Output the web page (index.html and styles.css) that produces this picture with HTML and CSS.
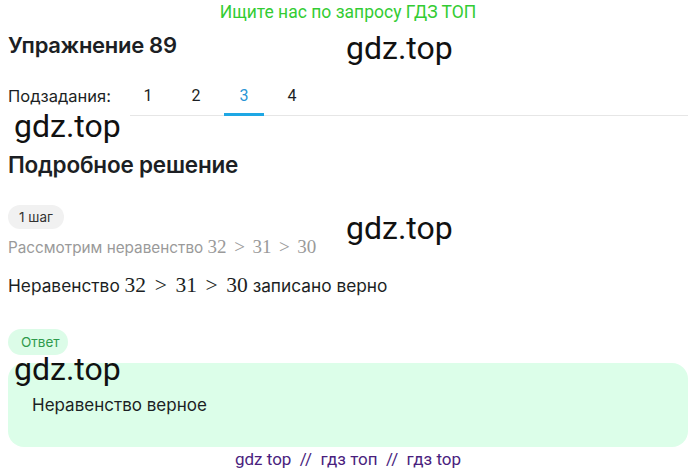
FILE: index.html
```html
<!DOCTYPE html>
<html lang="ru">
<head>
<meta charset="utf-8">
<link rel="stylesheet" href="styles.css">
</head>
<body>
<div class="page">
  <div class="promo">Ищите нас по запросу ГДЗ ТОП</div>
  <h1 class="title">Упражнение 89</h1>
  <div class="subtasks">
    <span class="sub-label">Подзадания:</span>
    <div class="tabs">
      <span class="tab">1</span>
      <span class="tab">2</span>
      <span class="tab active">3</span>
      <span class="tab">4</span>
    </div>
  </div>
  <h2 class="section">Подробное решение</h2>
  <span class="pill step">1 шаг</span>
  <p class="line muted">Рассмотрим неравенство <span class="math">32 <span class="op">&gt;</span> 31 <span class="op">&gt;</span> 30</span></p>
  <p class="line main">Неравенство <span class="math">32 <span class="op">&gt;</span> 31 <span class="op">&gt;</span> 30</span> записано верно</p>
  <span class="pill answer">Ответ</span>
  <div class="answer-box">Неравенство верное</div>
  <div class="footer">gdz top &nbsp;//&nbsp; гдз топ &nbsp;//&nbsp; гдз top</div>

  <span class="wm wm1">gdz.top</span>
  <span class="wm wm2">gdz.top</span>
  <span class="wm wm3">gdz.top</span>
  <span class="wm wm4">gdz.top</span>
</div>
</body>
</html>
```
FILE: styles.css
```css
* { box-sizing: border-box; }
html, body { margin: 0; padding: 0; background: #fff; }
body {
  font-family: "Inter", "Roboto", sans-serif;
  color: #1c1f24;
}
.page {
  position: relative;
  width: 695px;
  height: 474px;
  padding: 0 7px 0 8px;
  display: flex;
  flex-direction: column;
  align-items: flex-start;
  overflow: hidden;
}
.promo {
  align-self: stretch;
  text-align: center;
  font-family: "Roboto", sans-serif;
  color: #33cc33;
  font-size: 17.5px;
  line-height: 24px;
  height: 24px;
}
.title {
  margin: 7px 0 0;
  font-size: 22px;
  font-weight: 600;
  line-height: 28px;
  letter-spacing: -0.3px;
}
.subtasks {
  margin-top: 23px;
  align-self: stretch;
  display: flex;
  align-items: flex-start;
}
.sub-label {
  font-size: 16.5px;
  line-height: 28px;
  width: 122px;
}
.tabs {
  flex: 1;
  display: flex;
  border-bottom: 1px solid #e6e6e6;
  height: 34px;
}
.tab {
  width: 48px;
  text-align: center;
  font-family: "Roboto", sans-serif;
  font-size: 16px;
  line-height: 28px;
  color: #1c1f24;
}
.tab:first-child { margin-left: -6px; }
.tab.active {
  color: #2a95d5;
  border-bottom: 3px solid #1ea7e4;
  height: 34px;
  width: 40px;
  margin: 0 4px -1px;
}
.section {
  margin: 34px 0 0;
  font-size: 22.5px;
  font-weight: 600;
  line-height: 30px;
  letter-spacing: -0.2px;
}
.pill {
  display: inline-block;
  border-radius: 13px;
  font-size: 13.5px;
}
.step {
  margin-top: 25px;
  background: #f1f1f1;
  padding: 0 11px;
  line-height: 24px;
  color: #333;
  height: 24px;
  width: 56px;
}
.line {
  margin: 0;
}
.muted {
  color: #9a9a9a;
  margin-top: 6px;
  font-size: 15.3px;
  line-height: 26px;
  height: 26px;
}
.main {
  margin-top: 11px;
  font-size: 17.3px;
  line-height: 28px;
  height: 28px;
}
.math {
  font-family: "Liberation Serif", "DejaVu Serif", serif;
  line-height: 1;
}
.muted .math { font-size: 19px; }
.main .math { font-size: 21.5px; }
.op { margin: 0 0.15em; }
.answer {
  margin-top: 29px;
  background: #dcfce8;
  color: #2f9a4c;
  padding: 0 13px;
  line-height: 26px;
  height: 26px;
  width: 60px;
}
.answer-box {
  margin-top: 8px;
  align-self: stretch;
  background: #dcfee9;
  border-radius: 16px;
  height: 84px;
  padding: 31px 24px 0;
  font-size: 17px;
  line-height: 22px;
}
.footer {
  align-self: stretch;
  text-align: center;
  font-family: "Roboto", sans-serif;
  color: #4a1e7e;
  font-size: 17px;
  line-height: 24px;
}
.wm {
  position: absolute;
  font-family: "Roboto", sans-serif;
  font-size: 32px;
  line-height: 36px;
  color: #111;
}
.wm1 { left: 346px; top: 30px; }
.wm2 { left: 14px; top: 108px; }
.wm3 { left: 346px; top: 210px; }
.wm4 { left: 14px; top: 351px; }
```
